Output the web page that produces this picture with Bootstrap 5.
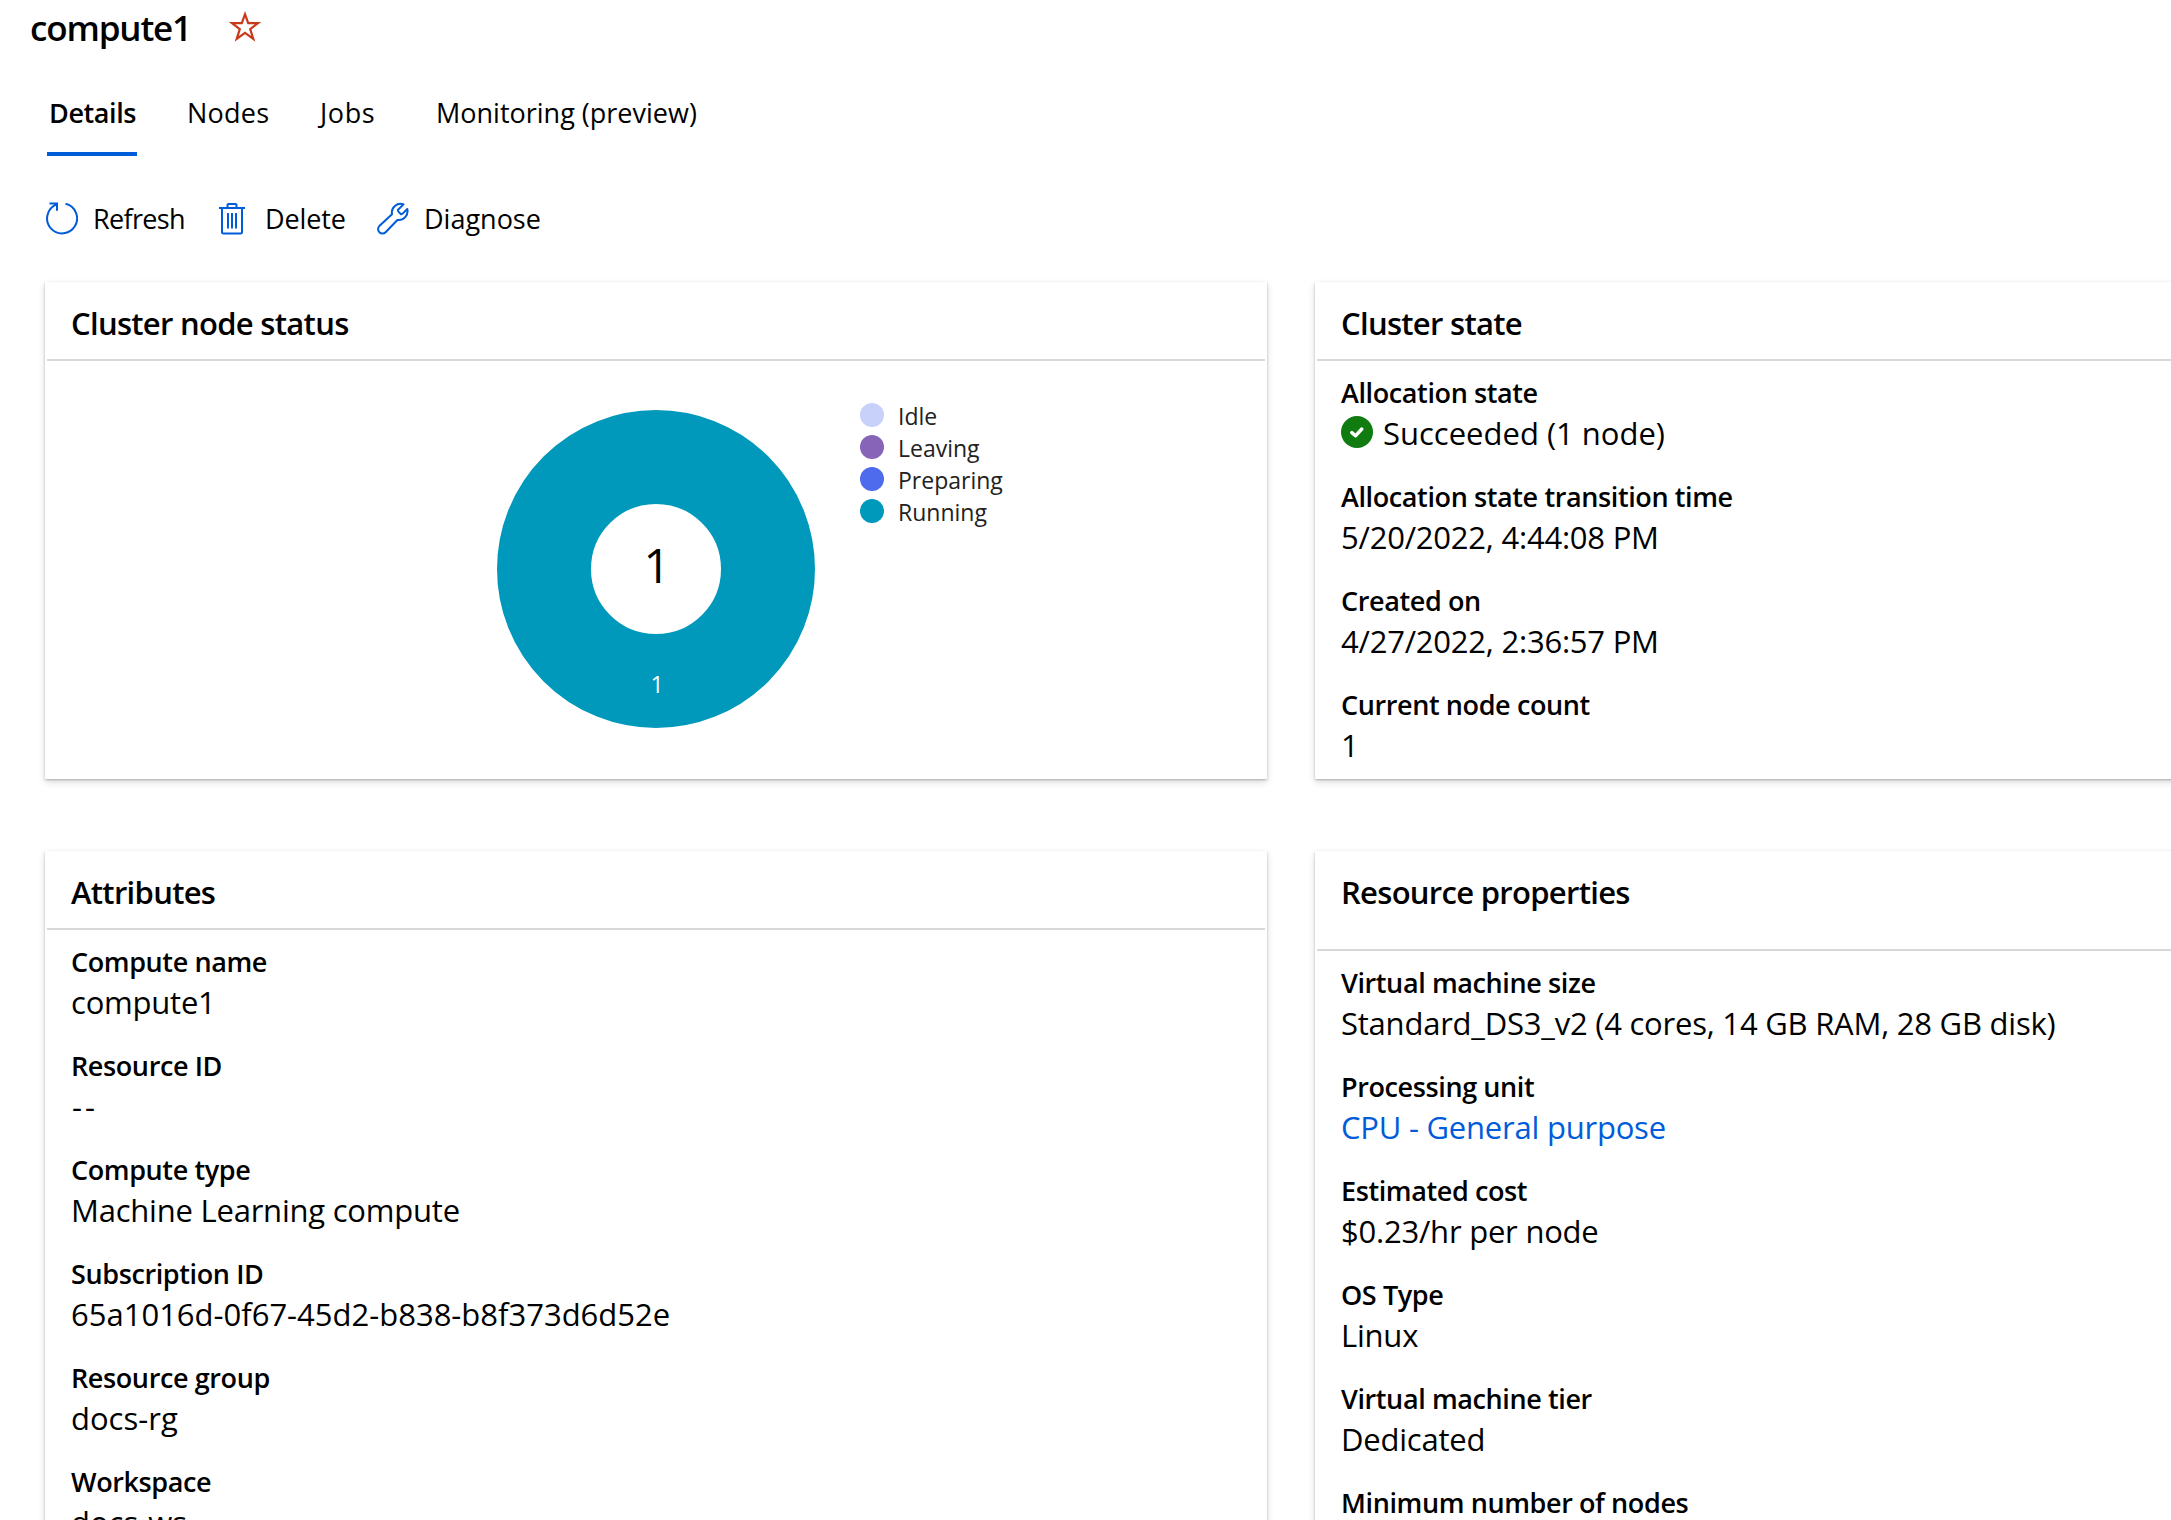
<!DOCTYPE html>
<html lang="en">
<head>
<meta charset="utf-8">
<title>compute1</title>
<link rel="stylesheet" href="https://cdn.jsdelivr.net/npm/bootstrap@5.3.0/dist/css/bootstrap.min.css">
<style>
body{width:2171px;height:1520px;overflow:hidden;background:#fff;color:#000;font-family:"Open Sans","Noto Sans",sans-serif;font-weight:370}
svg{display:block;flex:none}
.page-head{height:93px;padding:4px 0 0 30px}
.page-title{font-size:35px;line-height:48px;font-weight:600;letter-spacing:-1.15px;width:161px}
.star{margin:6px 0 0 37px}
.tabs{margin-left:47px}
.tabs .nav-link{padding:0 0 19px;border-bottom:4px solid transparent;font-size:27px;line-height:40px;color:#000;white-space:nowrap}
.tabs .nav-link.active{border-color:#015cda;font-weight:580;width:90px;letter-spacing:-.4px;padding-left:2px}
.tab-nodes{margin-left:50px;letter-spacing:.25px;width:82px}
.tab-jobs{margin-left:51px;letter-spacing:.6px;width:57px}
.tab-mon{margin-left:59px;letter-spacing:0}
.commands{margin:42px 0 0 45px;height:40px}
.cmd{border:0;background:none;padding:0;font-size:27px;line-height:40px;color:#000;white-space:nowrap;font-weight:370}
.cmd svg{margin-top:-1px}
.cmd span{margin-top:1px}
.cmd-refresh{width:174px;letter-spacing:-.65px;gap:15px}
.cmd-delete{width:158px;gap:20px;letter-spacing:-.1px}
.cmd-diagnose{gap:15px}
.panels{display:grid;grid-template-columns:1222px 1222px;column-gap:48px;row-gap:72px;margin:44px 0 0 45px;width:2492px}
.panel{border:0;border-radius:0;box-shadow:0 3px 7px rgba(0,0,0,.15),0 .6px 2px rgba(0,0,0,.24);height:497px}
.panel-tall{height:760px}
.panel-title{margin:0 2px;padding:19px 24px 14px;border-bottom:2px solid #d8d8d8;font-size:31px;line-height:44px;font-weight:540;letter-spacing:-.7px}
.panel-title-tall{padding-bottom:35px}
.props{padding:12px 26px 0;margin:0}
.props dt{font-size:27px;line-height:40px;font-weight:550;letter-spacing:-.39px}
.props dd{font-size:31px;line-height:40px;margin:0 0 24px;letter-spacing:-.22px;white-space:nowrap}
.props .even{letter-spacing:0}
.props .dashes{letter-spacing:3px;padding-left:1px}
.props a{color:#015cda;text-decoration:none}
.ok-row{gap:10px}
.ok-row svg{margin-top:3px}
.chart{padding:49px 0 0 452px}
.legend{margin:-10px 0 0 45px;font-size:23px;line-height:32px;color:#222}
.legend li{height:32px;gap:14px}
.dot{width:24px;height:24px;border-radius:50%;margin-top:-2px}
.idle{background:#c7d1fa}.leaving{background:#8764b8}.preparing{background:#4f6bed}.running{background:#0099bc}
</style>
</head>
<body>
<header class="page-head d-flex align-items-start">
  <h1 class="page-title m-0">compute1</h1>
  <svg class="star" width="34" height="34" viewBox="0 0 34 34" fill="none" stroke="#c93a1a" stroke-width="2.2"><path d="M17 4.2L20.2 13.2H30L22.2 19.1L25.3 29L17 22.9L8.7 29L11.8 19.1L4 13.2H13.8Z"/></svg>
</header>
<nav class="nav tabs flex-nowrap">
  <a class="nav-link active" href="#">Details</a>
  <a class="nav-link tab-nodes" href="#">Nodes</a>
  <a class="nav-link tab-jobs" href="#">Jobs</a>
  <a class="nav-link tab-mon" href="#">Monitoring (preview)</a>
</nav>
<div class="commands d-flex">
  <button class="cmd cmd-refresh d-flex align-items-center"><svg width="33" height="34" viewBox="0 0 33 34" fill="none" stroke="#015cda" stroke-width="2"><path d="M20.5 2.8A15 15 0 1 1 11 3.7M4.5 2.5H12V9.8"/></svg><span>Refresh</span></button>
  <button class="cmd cmd-delete d-flex align-items-center"><svg width="26" height="34" viewBox="0 0 26 34" fill="none" stroke="#015cda" stroke-width="2"><path d="M0 7H26M8.5 7V4Q8.5 3 9.5 3H16.5Q17.5 3 17.5 4V7M3 7V31Q3 32.5 4.5 32.5H21.5Q23 32.5 23 31V7M9 12V27.5M13 12V27.5M17 12V27.5"/></svg><span>Delete</span></button>
  <button class="cmd cmd-diagnose d-flex align-items-center"><svg width="32" height="34" viewBox="0 0 32 34" fill="none" stroke="#015cda" stroke-width="2" stroke-linejoin="round"><path d="M26.5 3.4L20.8 9L21.4 10.6L24 13.2L25.6 12.6L30.3 8A9 9 0 0 1 20.4 19L8.6 31.2A4.3 4.3 0 0 1 2.3 25.1L15 13.2A8.7 8.7 0 0 1 26.5 3.4Z"/></svg><span>Diagnose</span></button>
</div>
<main class="panels">
  <section class="card panel">
    <h2 class="panel-title">Cluster node status</h2>
    <div class="chart d-flex">
      <svg width="318" height="318" viewBox="0 0 318 318" font-family="Open Sans" text-anchor="middle"><circle cx="159" cy="159" r="112" fill="none" stroke="#0099bc" stroke-width="94"/><text x="160" y="173" font-size="47">1</text><text x="160" y="283" font-size="23" fill="#fff">1</text></svg>
      <ul class="legend list-unstyled">
        <li class="d-flex align-items-center"><span class="dot idle"></span>Idle</li>
        <li class="d-flex align-items-center"><span class="dot leaving"></span>Leaving</li>
        <li class="d-flex align-items-center"><span class="dot preparing"></span>Preparing</li>
        <li class="d-flex align-items-center"><span class="dot running"></span>Running</li>
      </ul>
    </div>
  </section>
  <section class="card panel">
    <h2 class="panel-title">Cluster state</h2>
    <dl class="props">
      <dt>Allocation state</dt>
      <dd class="even d-flex ok-row"><svg width="32" height="32" viewBox="0 0 32 32"><circle cx="16" cy="16" r="16" fill="#107c10"/><path d="M10.8 16.6L14.5 19.8L20.8 13" fill="none" stroke="#fff" stroke-width="3.4" stroke-linecap="round" stroke-linejoin="round"/></svg>Succeeded (1 node)</dd>
      <dt>Allocation state transition time</dt><dd>5/20/2022, 4:44:08 PM</dd>
      <dt>Created on</dt><dd>4/27/2022, 2:36:57 PM</dd>
      <dt>Current node count</dt><dd>1</dd>
    </dl>
  </section>
  <section class="card panel panel-tall">
    <h2 class="panel-title">Attributes</h2>
    <dl class="props">
      <dt>Compute name</dt><dd>compute1</dd>
      <dt>Resource ID</dt><dd class="dashes">--</dd>
      <dt>Compute type</dt><dd>Machine Learning compute</dd>
      <dt>Subscription ID</dt><dd class="even">65a1016d-0f67-45d2-b838-b8f373d6d52e</dd>
      <dt>Resource group</dt><dd class="even">docs-rg</dd>
      <dt>Workspace</dt><dd class="even">docs-ws</dd>
    </dl>
  </section>
  <section class="card panel panel-tall">
    <h2 class="panel-title panel-title-tall">Resource properties</h2>
    <dl class="props">
      <dt>Virtual machine size</dt><dd>Standard_DS3_v2 (4 cores, 14 GB RAM, 28 GB disk)</dd>
      <dt>Processing unit</dt><dd><a href="#">CPU - General purpose</a></dd>
      <dt>Estimated cost</dt><dd>$0.23/hr per node</dd>
      <dt>OS Type</dt><dd>Linux</dd>
      <dt>Virtual machine tier</dt><dd>Dedicated</dd>
      <dt>Minimum number of nodes</dt>
    </dl>
  </section>
</main>
<script src="https://cdn.jsdelivr.net/npm/bootstrap@5.3.0/dist/js/bootstrap.bundle.min.js"></script>
</body>
</html>
